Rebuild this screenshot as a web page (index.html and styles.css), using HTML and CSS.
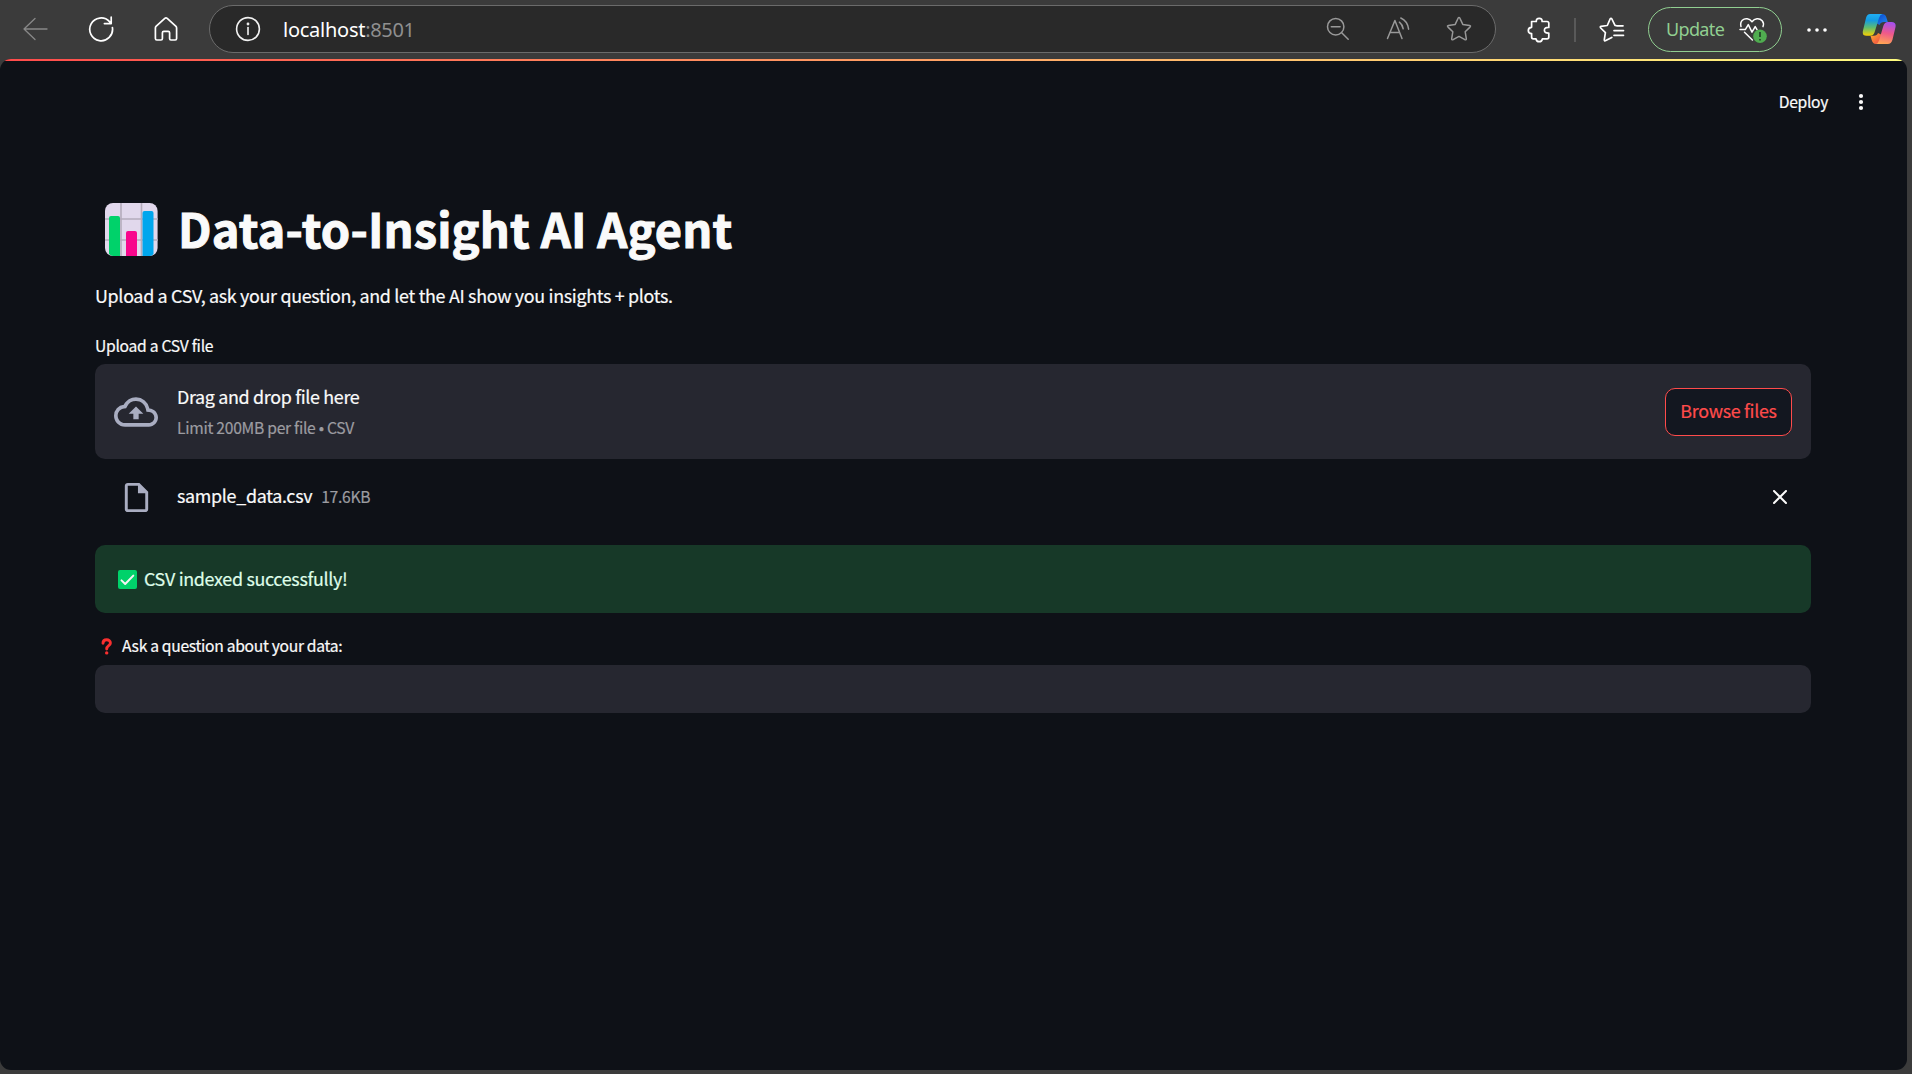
FILE: index.html
```html
<!DOCTYPE html>
<html lang="en">
<head>
<meta charset="utf-8">
<title>Data-to-Insight AI Agent</title>
<link rel="stylesheet" href="styles.css">
</head>
<body>
<header class="toolbar">
  <nav class="nav">
    <svg width="26" height="26" viewBox="0 0 26 26" class="line dim"><path d="M25 13H2M13 2.5 2 13 13 23.5"/></svg>
    <svg width="26" height="26" viewBox="0 0 26 26" class="line bold"><path d="M24.4 11.5A11.4 11.4 0 1 1 21.5 5.6L23 7.4M23.2 1.2V7.6H16.4"/></svg>
    <svg width="24" height="26" viewBox="0 0 24 26" class="line bold"><path d="M2 10.4 10.8 2.3Q12 1.3 13.2 2.3L22 10.4Q22.6 11 22.6 12V22.6Q22.6 24 21.2 24H17Q15.6 24 15.6 22.6V16.8Q15.6 15.4 14.2 15.4H9.8Q8.4 15.4 8.4 16.8V22.6Q8.4 24 7 24H2.8Q1.4 24 1.4 22.6V12Q1.4 11 2 10.4Z"/></svg>
  </nav>
  <div class="address">
    <svg width="26" height="26" viewBox="0 0 26 26" class="line info"><circle cx="13" cy="13" r="11.4"/><path d="M13 11.5V18.5"/><circle cx="13" cy="8" r=".6"/></svg>
    <div class="url"><span class="host">localhost</span><span class="port">:8501</span></div>
    <div class="tools">
      <svg width="24" height="24" viewBox="0 0 24 24" class="line"><circle cx="9.7" cy="9.7" r="8.2"/><path d="M15.7 15.7 22.2 22.2M5.3 9.7H14.1"/></svg>
      <svg width="24" height="24" viewBox="0 0 24 24" class="line"><path d="M1.5 21.5 8.9 3.5 16 21.5M4.2 15.5H13.4M13.4 5.2Q16.6 7.8 17.2 11.8M14.8 1Q21.6 4 22.6 12.2"/></svg>
      <svg width="26" height="26" viewBox="0 0 26 26" class="line"><path d="M12.1 2.2Q13 .8 13.9 2.2L16.8 8.4 23.6 9.4Q25.2 9.8 24 11.1L19.2 15.8 20.3 22.7Q20.4 24.3 18.9 23.7L13 20.4 7.1 23.7Q5.6 24.3 5.7 22.7L6.8 15.8 2 11.1Q.8 9.8 2.4 9.4L9.2 8.4Z"/></svg>
    </div>
  </div>
  <svg width="24" height="26" viewBox="0 0 24 26" class="line bold puzzle"><path d="M4.6 4.5H9.3Q9.1 1.3 12.2 1.3T15.1 4.5H20Q21.8 4.5 21.8 6.3V10.5Q17.4 10.2 17.4 13.3T21.8 16.2V20Q21.8 21.8 20 21.8H15.4Q15 24.7 12.2 24.7T9 21.8H6.4Q4.6 21.8 4.6 20V16.6Q1.3 16.3 1.3 13.4T4.6 10.3Z"/></svg>
  <span class="divider"></span>
  <svg width="26" height="26" viewBox="0 0 26 26" class="line bold favs"><path d="M24 8.8H17.6L16 8.4 12.9 2Q12 .8 11.1 2L8.3 8.5 2 9.4Q.7 9.8 1.7 11L6.4 15.6 5.3 22.6Q5.2 24.4 6.8 23.6L12.8 20.4M15 13.6H24.5M15 18.3H24.5"/></svg>
  <div class="update">
    <span>Update</span>
    <svg width="28" height="26" viewBox="0 0 28 26"><path class="heart" d="M2 9.6C.5 3.4 5 1.3 8.2 1.7Q11 2 13 4.7Q15 2 18 1.7C22 1.3 25.8 5 24 9.6M1 12.6H6.3L9.3 7.6 13 15.2 16.2 9.6 18 12.6M5.5 15.3 13.4 23"/><circle cx="21" cy="19.2" r="6.8" fill="#50ad50"/><path d="M21 15V20M21 22V23.5" stroke="#244a28" stroke-width="1.8"/></svg>
  </div>
  <svg width="20" height="6" viewBox="0 0 20 6" class="more" fill="#fff"><circle cx="2" cy="3" r="1.8"/><circle cx="10" cy="3" r="1.8"/><circle cx="18" cy="3" r="1.8"/></svg>
  <svg width="34" height="32" viewBox="0 0 34 32" class="copilot">
    <defs>
      <linearGradient id="left" x1="0" y1="0" x2="0" y2="1"><stop offset="0" stop-color="#20aef4"/><stop offset=".3" stop-color="#159ce0"/><stop offset=".62" stop-color="#5fbc70"/><stop offset="1" stop-color="#f8d000"/></linearGradient>
      <linearGradient id="right" x1=".6" y1="0" x2=".4" y2="1"><stop offset="0" stop-color="#a650ed"/><stop offset=".5" stop-color="#ef598a"/><stop offset="1" stop-color="#ffa454"/></linearGradient>
      <linearGradient id="blue" x1="0" y1="0" x2="1" y2="1"><stop offset="0" stop-color="#0d42c8"/><stop offset="1" stop-color="#1e8bf0"/></linearGradient>
      <linearGradient id="orange" x1="0" y1="0" x2="1" y2="1"><stop offset="0" stop-color="#ffb12c"/><stop offset="1" stop-color="#ed3e4a"/></linearGradient>
    </defs>
    <path fill="url(#blue)" d="M15 1H20Q23.2 1 24.3 4.2L25.8 9H22Q18.5 9 17.5 12L14 10Z"/>
    <path fill="url(#orange)" d="M8.5 22.8H12Q15 22.8 16 20L20 22 18.5 27Q17 31 13.8 31 10.8 31 9.7 27Z"/>
    <path fill="url(#left)" d="M8.2 1H20.5Q18 1.6 17 5L12.6 19.2Q11.5 22.8 8 22.8H4.4Q-.2 22.8 1 17.5L4 5Q5 1 8.2 1Z"/>
    <path fill="url(#right)" d="M25.8 31H13.8Q16.2 30.4 17.2 27L21.4 12.8Q22.5 9 26 9H29.6Q34.6 9 33.4 14.5L30.4 27Q29.2 31 25.8 31Z"/>
  </svg>
</header>

<main class="page">
  <div class="stripe"></div>
  <div class="app-bar">
    <span class="deploy">Deploy</span>
    <svg width="6" height="18" viewBox="0 0 6 18" fill="#fafafa"><circle cx="3" cy="3" r="2.1"/><circle cx="3" cy="9" r="2.1"/><circle cx="3" cy="15" r="2.1"/></svg>
  </div>
  <section class="content">
    <h1 class="title">
      <svg width="53" height="53" viewBox="0 0 53 53"><rect width="52.6" height="53" rx="8" fill="#e1d8ec"/><path d="M16 0V53M36.5 0V53M0 16H53M0 37H53" stroke="#b4acbc" stroke-width="1.6"/><path fill="#00d26a" d="M4 15Q4 13 6 13H13Q15 13 15 15V53H8Q6 53 4 51Z"/><path fill="#f8068c" d="M21 30Q21 28 23 28H30Q32 28 32 30V53H21Z"/><path fill="#00a6ed" d="M37.5 10Q37.5 8 39.5 8H46.5Q48.5 8 48.5 10V51Q47 53 45 53H37.5Z"/></svg>
      <span>Data-to-Insight AI Agent</span>
    </h1>
    <p class="intro"><span>Upload a CSV, ask your question, and let the AI show you insights + plots.</span></p>
    <div class="label upload-label"><span>Upload a CSV file</span></div>
    <div class="dropzone">
      <svg width="44" height="44" viewBox="0 0 24 24" fill="#a9adc1"><path d="M19.35 10.04A7.49 7.49 0 0 0 12 4C9.11 4 6.6 5.64 5.35 8.04A5.994 5.994 0 0 0 0 14c0 3.31 2.69 6 6 6h13c2.76 0 5-2.24 5-5 0-2.64-2.05-4.78-4.65-4.96zM19 18H6c-2.21 0-4-1.79-4-4 0-2.05 1.53-3.76 3.56-3.97l1.07-.11.5-.95A5.469 5.469 0 0 1 12 6c2.62 0 4.88 1.86 5.39 4.43l.3 1.5 1.53.11A2.98 2.98 0 0 1 22 15c0 1.65-1.35 3-3 3zM8 13h2.55v3h2.9v-3H16l-4-4z"/></svg>
      <div class="hint"><span class="hint-main">Drag and drop file here</span><span class="hint-sub">Limit 200MB per file • CSV</span></div>
      <button class="browse"><span>Browse files</span></button>
    </div>
    <div class="file">
      <svg width="35" height="35" viewBox="0 0 24 24" fill="#a9adc1"><path d="M14 2H6c-1.1 0-2 .9-2 2v16c0 1.1.9 2 2 2h12c1.1 0 2-.9 2-2V8l-6-6zM6 20V4h7v5h5v11H6z"/></svg>
      <div class="file-info"><span class="file-name">sample_data.csv</span><span class="file-size">17.6KB</span></div>
      <svg class="close" width="14" height="14" viewBox="0 0 14 14"><path d="M1 1 13 13M13 1 1 13" stroke="#fafafa" stroke-width="2" stroke-linecap="round"/></svg>
    </div>
    <div class="alert">
      <svg width="19" height="19" viewBox="0 0 19 19"><rect width="19" height="19" rx="2" fill="#00d26a"/><path d="M3.5 10.4 7.2 14 15.3 5.6" fill="none" stroke="#f4f4f4" stroke-width="2" stroke-linecap="round" stroke-linejoin="round"/></svg>
      <span>CSV indexed successfully!</span>
    </div>
    <div class="label ask-label">
      <svg width="12" height="17" viewBox="0 0 12 17"><path d="M2 5.2C2 .7 9.4.6 9.4 5 9.4 8 5.7 7.4 5.7 11" fill="none" stroke="#f92f2f" stroke-width="2.9" stroke-linecap="round"/><circle cx="5.7" cy="14.9" r="1.7" fill="#f92f2f"/></svg>
      <span>Ask a question about your data:</span>
    </div>
    <input class="question" type="text" aria-label="Ask a question about your data">
  </section>
</main>
</body>
</html>
```
FILE: styles.css
```css
* { box-sizing: border-box; }
body {
  margin: 0;
  height: 1074px;
  overflow: hidden;
  background: #3b3b3b;
  color: #fafafa;
  font-family: "Noto Sans CJK JP", "Source Sans Pro", sans-serif;
}
svg { display: block; flex: none; }
span { white-space: nowrap; }

/* Browser toolbar */
.toolbar {
  display: flex;
  align-items: center;
  height: 59px;
  font-family: "Noto Sans", sans-serif;
}
.nav { display: flex; align-items: center; width: 209px; padding: 0 0 1px 22px; gap: 40px; }
.line { fill: none; stroke: #999; stroke-width: 1.5; stroke-linecap: round; stroke-linejoin: round; }
.line.bold { stroke: #fff; stroke-width: 1.7; }
.line.dim { stroke: #888; stroke-width: 1.3; }
.line.info { stroke: #f2f2f2; stroke-width: 1.6; }
.address {
  display: flex;
  align-items: center;
  width: 1287px;
  height: 48px;
  margin-bottom: 1px;
  padding: 0 23px 0 25px;
  border: 1px solid #6b6b6b;
  border-radius: 24px;
  background: #292929;
}
.url { display: flex; margin-left: 22px; padding-top: 1px; font-size: 20px; line-height: 28px; }
.host { color: #fff; letter-spacing: -.25px; }
.port { color: #8f8f8f; letter-spacing: -.35px; }
.tools { display: flex; align-items: center; gap: 36px; margin-left: auto; }
.puzzle { margin-left: 31px; }
.divider { width: 2px; height: 24px; margin: 0 23px 0 23px; background: #595959; }
.update {
  display: flex;
  align-items: center;
  gap: 15px;
  width: 134px;
  height: 45px;
  margin-left: 23px;
  padding-left: 17px;
  border: 1.5px solid #91cf91;
  border-radius: 23px;
  color: #91cf91;
  font-size: 18px;
  line-height: 24px;
  letter-spacing: -.65px;
}
.update span { padding-bottom: 1px; }
.heart { fill: none; stroke: #fff; stroke-width: 1.5; stroke-linecap: round; stroke-linejoin: round; }
.more { margin-left: 25px; }
.copilot { margin-left: 35px; margin-bottom: 2px; }

/* Application page */
.page {
  width: 1907px;
  height: 1011px;
  overflow: hidden;
  border-radius: 11px;
  background: #0e1117;
  letter-spacing: -.315px;
  -webkit-text-stroke: .2px currentColor;
}
.stripe { height: 2px; background: linear-gradient(90deg, #ff4b4b, #fffd80); }
.app-bar {
  display: flex;
  justify-content: flex-end;
  align-items: center;
  gap: 30px;
  height: 82px;
  padding-right: 43px;
}
.deploy { padding-bottom: 1px; font-size: 15.67px; }
.content { display: flex; flex-direction: column; padding: 58px 96px 0 95px; }
.title {
  display: flex;
  align-items: center;
  gap: 20px;
  height: 56px;
  margin: 0;
  padding-left: 10px;
  font-size: 47px;
  font-weight: 700;
  line-height: 56px;
  letter-spacing: .12px;
  -webkit-text-stroke: 1px currentColor;
}
.title span { padding-bottom: 3px; }
.intro { height: 30px; margin: 23px 0 0; font-size: 17.9px; line-height: 30px; }
.label { display: flex; align-items: center; height: 24px; font-size: 15.67px; line-height: 24px; letter-spacing: -.28px; }
.upload-label { margin-top: 24px; margin-bottom: 6px; }
.dropzone {
  display: flex;
  align-items: center;
  height: 95px;
  padding: 0 19px 0 19px;
  border-radius: 10px;
  background: #262730;
}
.hint { display: flex; flex-direction: column; margin-left: 19px; padding-top: 1px; }
.hint-main { font-size: 17.9px; line-height: 31px; letter-spacing: -.33px; }
.hint-sub { color: #9c9ca1; font-size: 15.67px; line-height: 32px; letter-spacing: -.28px; }
.browse {
  width: 127px;
  height: 48px;
  margin-left: auto;
  padding: 0 0 3px;
  border: 1px solid #ff4b4b;
  border-radius: 10px;
  background: #131720;
  color: #ff4b4b;
  font: 17.9px/28px "Noto Sans CJK JP", sans-serif;
  letter-spacing: -.3px;
}
.file { display: flex; align-items: center; height: 76px; padding: 0 24px; }
.file-info { display: flex; align-items: baseline; gap: 9px; margin-left: 23px; padding-bottom: 5px; }
.file-name { font-size: 17.9px; }
.file-size { color: #9c9ca1; font-size: 15.67px; }
.close { margin-left: auto; }
.alert {
  display: flex;
  align-items: center;
  gap: 7px;
  height: 68px;
  margin-top: 10px;
  padding-left: 23px;
  border-radius: 10px;
  background: #173928;
  color: #dffde9;
  font-size: 17.9px;
}
.alert span { padding-bottom: 2px; }
.ask-label { gap: 9px; margin: 22px 0 6px; padding: 0 0 1px 6px; letter-spacing: -.31px; }
.ask-label span { padding-bottom: 1px; }
.question { height: 48px; padding: 0 15px; border: 0; border-radius: 10px; background: #262730; color: #fafafa; }
```
